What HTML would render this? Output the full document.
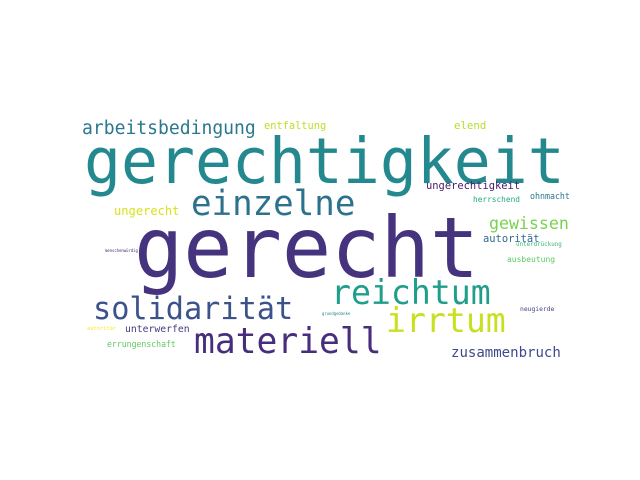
<!DOCTYPE html>
<html><head><meta charset="utf-8"><style>
html,body{margin:0;padding:0;background:#fff;}
body{width:640px;height:480px;position:relative;overflow:hidden;font-family:"DejaVu Sans Mono","Liberation Mono",monospace;}
span{position:absolute;line-height:1;white-space:nowrap;transform:scaleX(0.975);transform-origin:0 0;}
</style></head><body>
<span style="font-size:18.5px;left:calc(83px - 0.07em);top:calc(136px - 0.846em);color:#2a788e">arbeitsbedingung</span>
<span style="font-size:10.6px;left:calc(265px - 0.07em);top:calc(130px - 0.846em);color:#bddf26">entfaltung</span>
<span style="font-size:11px;left:calc(455px - 0.07em);top:calc(129px - 0.846em);color:#b5de2b">elend</span>
<span style="font-size:63px;left:calc(88px - 0.07em);top:calc(183px - 0.846em);color:#23898e">gerechtigkeit</span>
<span style="font-size:10.7px;left:calc(427px - 0.07em);top:calc(190px - 0.846em);color:#481a6c">ungerechtigkeit</span>
<span style="font-size:8px;left:calc(474px - 0.07em);top:calc(203px - 0.846em);color:#22a884">herrschend</span>
<span style="font-size:8.5px;left:calc(531px - 0.07em);top:calc(200px - 0.846em);color:#2a788e">ohnmacht</span>
<span style="font-size:35px;left:calc(193px - 0.07em);top:calc(217px - 0.846em);color:#2c728e">einzelne</span>
<span style="font-size:12.4px;left:calc(115px - 0.07em);top:calc(215px - 0.846em);color:#d8e219">ungerecht</span>
<span style="font-size:84px;left:calc(140px - 0.07em);top:calc(277px - 0.846em);color:#46337e">gerecht</span>
<span style="font-size:4px;left:calc(105px - 0.07em);top:calc(252px - 0.846em);color:#482475">menschenwürdig</span>
<span style="font-size:17px;left:calc(490px - 0.07em);top:calc(230px - 0.846em);color:#7ad151">gewissen</span>
<span style="font-size:10.7px;left:calc(484px - 0.07em);top:calc(243px - 0.846em);color:#31688e">autorität</span>
<span style="font-size:6px;left:calc(516px - 0.07em);top:calc(247px - 0.846em);color:#35b779">unterdrückung</span>
<span style="font-size:8.2px;left:calc(508px - 0.07em);top:calc(262px - 0.846em);color:#5ec962">ausbeutung</span>
<span style="font-size:34px;left:calc(333px - 0.07em);top:calc(305px - 0.846em);color:#1f9e89">reichtum</span>
<span style="font-size:31px;left:calc(95px - 0.07em);top:calc(320px - 0.846em);color:#3b528b">solidarität</span>
<span style="font-size:34px;left:calc(388px - 0.07em);top:calc(333px - 0.846em);color:#c8e020">irrtum</span>
<span style="font-size:35.5px;left:calc(196px - 0.07em);top:calc(354px - 0.846em);color:#472d7b">materiell</span>
<span style="font-size:6.5px;left:calc(520px - 0.07em);top:calc(311px - 0.846em);color:#414487">neugierde</span>
<span style="font-size:4px;left:calc(322px - 0.07em);top:calc(315px - 0.846em);color:#26828e">grundgedanke</span>
<span style="font-size:5.5px;left:calc(87px - 0.07em);top:calc(332px - 0.846em);color:#fde725">autoritär</span>
<span style="font-size:10px;left:calc(126px - 0.07em);top:calc(333px - 0.846em);color:#443a83">unterwerfen</span>
<span style="font-size:8.4px;left:calc(108px - 0.07em);top:calc(347px - 0.846em);color:#5ec962">errungenschaft</span>
<span style="font-size:14.4px;left:calc(452px - 0.07em);top:calc(358px - 0.846em);color:#3e4a89">zusammenbruch</span>
</body></html>
